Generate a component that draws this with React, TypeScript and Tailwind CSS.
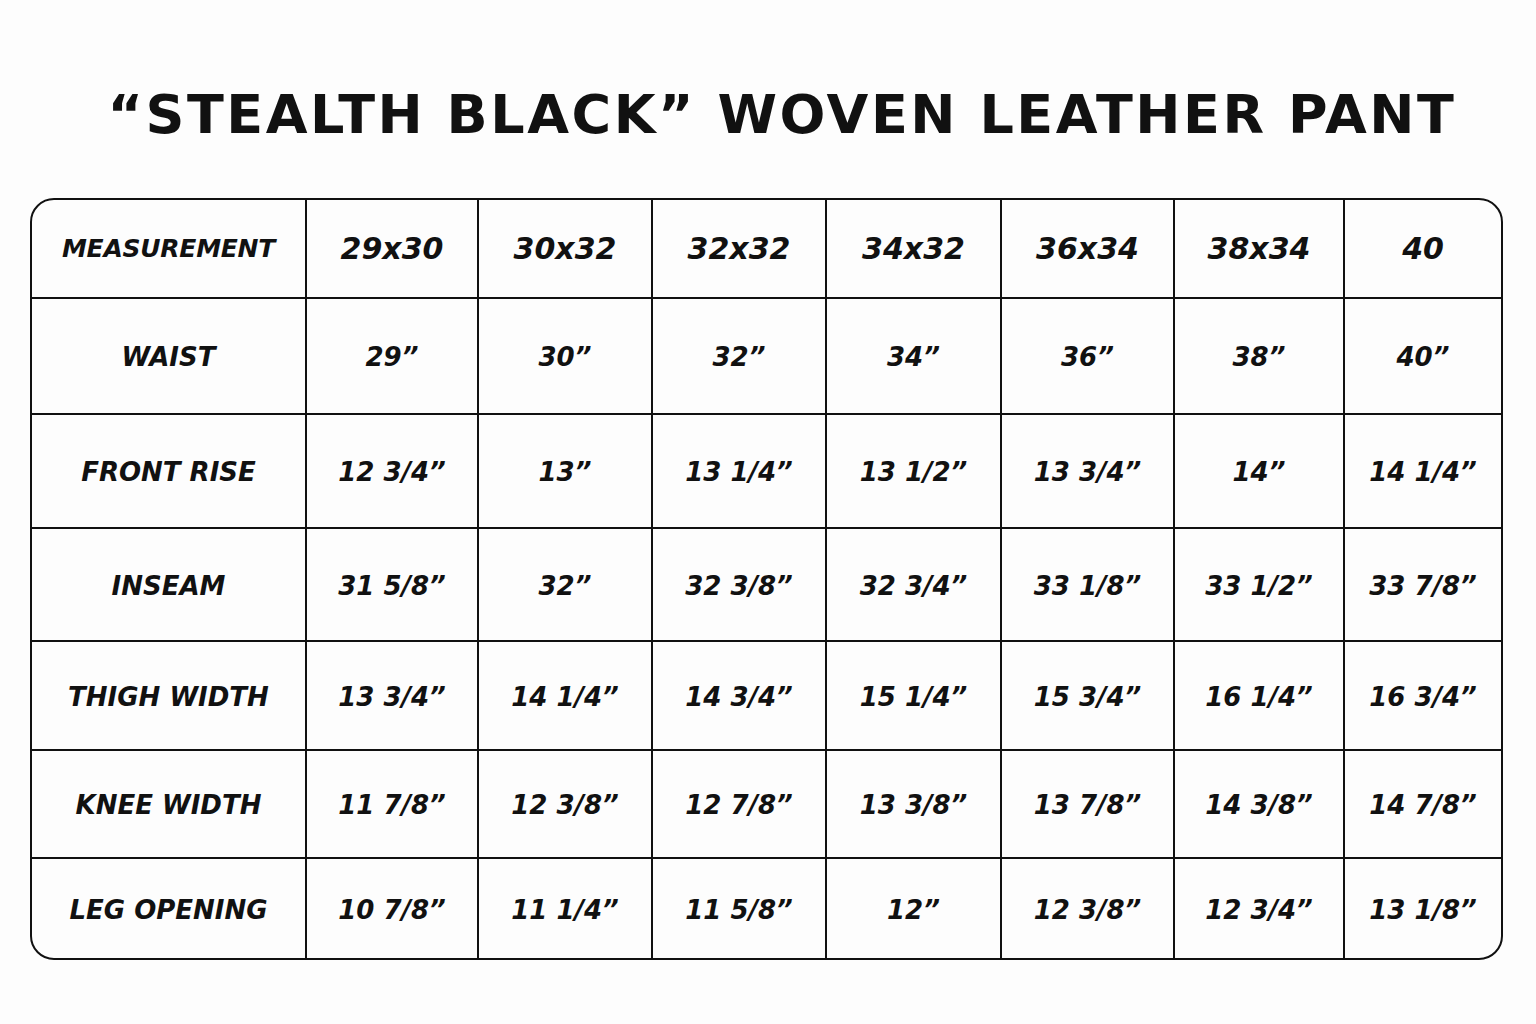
const sizes = ['29x30', '30x32', '32x32', '34x32', '36x34', '38x34', '40'];

const rows: { label: string; values: string[] }[] = [
  { label: 'WAIST', values: ['29”', '30”', '32”', '34”', '36”', '38”', '40”'] },
  { label: 'FRONT RISE', values: ['12 3/4”', '13”', '13 1/4”', '13 1/2”', '13 3/4”', '14”', '14 1/4”'] },
  { label: 'INSEAM', values: ['31 5/8”', '32”', '32 3/8”', '32 3/4”', '33 1/8”', '33 1/2”', '33 7/8”'] },
  { label: 'THIGH WIDTH', values: ['13 3/4”', '14 1/4”', '14 3/4”', '15 1/4”', '15 3/4”', '16 1/4”', '16 3/4”'] },
  { label: 'KNEE WIDTH', values: ['11 7/8”', '12 3/8”', '12 7/8”', '13 3/8”', '13 7/8”', '14 3/8”', '14 7/8”'] },
  { label: 'LEG OPENING', values: ['10 7/8”', '11 1/4”', '11 5/8”', '12”', '12 3/8”', '12 3/4”', '13 1/8”'] },
];

export default function App() {
  return (
    <div
      className="flex h-[1024px] w-[1536px] flex-col items-center bg-[#fdfdfd] text-[#111]"
      style={{ fontFamily: '"DejaVu Sans", "Liberation Sans", sans-serif' }}
    >
      {/* Title */}
      <h1 className="mt-[84px] ml-[28px] h-[62px] text-[54px] leading-[62px] font-bold tracking-[0.047em] whitespace-nowrap">
        “STEALTH BLACK” WOVEN LEATHER PANT
      </h1>

      {/* Size chart */}
      <div className="mt-[52px] ml-[30px] w-[1473px] self-start overflow-hidden rounded-[24px] border-2 border-[#111]">
        <div className="grid grid-cols-[275px_172px_174px_174px_175px_173px_170px_1fr] grid-rows-[99px_116px_114px_113px_109px_108px_1fr] h-[758px] italic">
          <div className="flex items-center justify-center border-r-2 border-b-2 border-[#111] text-[25px] font-bold tracking-[-0.01em]">
            MEASUREMENT
          </div>
          {sizes.map((s, i) => (
            <div
              key={s}
              className={`flex items-center justify-center border-b-2 border-[#111] text-[30px] font-semibold ${
                i < sizes.length - 1 ? 'border-r-2' : ''
              }`}
            >
              {s}
            </div>
          ))}

          {rows.map((row, r) => {
            const last = r === rows.length - 1;
            return [
              <div
                key={row.label}
                className={`flex items-center justify-center border-r-2 border-[#111] pt-[3px] text-[26px] font-bold ${
                  last ? '' : 'border-b-2'
                }`}
              >
                {row.label}
              </div>,
              ...row.values.map((v, i) => (
                <div
                  key={row.label + i}
                  className={`flex items-center justify-center border-[#111] pt-[3px] text-[26px] font-semibold ${
                    last ? '' : 'border-b-2'
                  } ${i < row.values.length - 1 ? 'border-r-2' : ''}`}
                >
                  {v}
                </div>
              )),
            ];
          })}
        </div>
      </div>
    </div>
  );
}
